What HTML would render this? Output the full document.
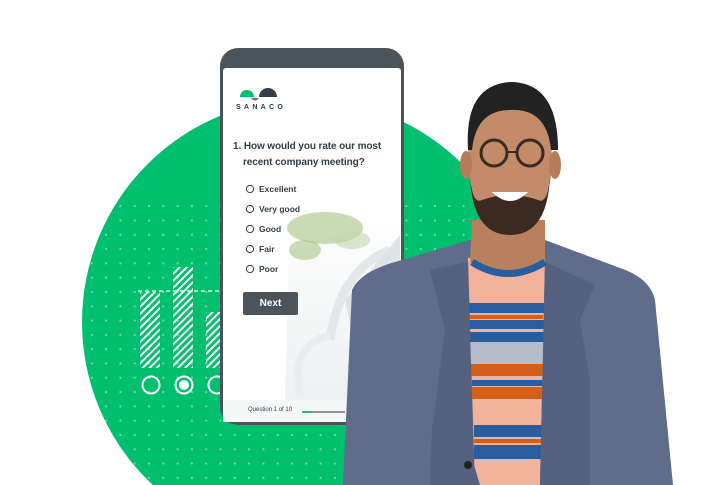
<!DOCTYPE html>
<html style="margin:0;width:720px;height:485px;overflow:hidden"><head><meta charset="utf-8"><style>
body{margin:0;width:720px;height:485px;overflow:hidden;background:#fff;font-family:"Liberation Sans",sans-serif;position:relative}
.abs{position:absolute}
</style></head><body>
<svg class="abs" style="left:0;top:0;display:block" width="720" height="485" viewBox="0 0 720 485">
<defs>
<pattern id="dots" width="14.3" height="14.3" patternUnits="userSpaceOnUse" x="3" y="3"><circle cx="3" cy="3" r="1.1" fill="#7ed9a6"/></pattern>
<pattern id="hatch" width="5" height="5" patternUnits="userSpaceOnUse" patternTransform="rotate(45)"><rect width="2" height="5" fill="#fff"/></pattern>
<clipPath id="cc"><circle cx="305" cy="322" r="223"/></clipPath>
<linearGradient id="sky" x1="0" y1="0" x2="0" y2="1"><stop offset="0" stop-color="#fff"/><stop offset="1" stop-color="#eef0f1"/></linearGradient>
</defs>
<circle cx="305" cy="322" r="223" fill="#00bf6f"/>
<rect x="82" y="200" width="400" height="285" fill="url(#dots)" clip-path="url(#cc)"/>
<rect x="140" y="292" width="20" height="76" fill="url(#hatch)"/>
<rect x="173" y="267" width="20" height="101" fill="url(#hatch)"/>
<rect x="206" y="312" width="20" height="56" fill="url(#hatch)"/>
<line x1="138" y1="291" x2="225" y2="291" stroke="#fff" stroke-width="1.2" stroke-dasharray="4 3"/>
<circle cx="151" cy="385" r="8.5" fill="none" stroke="#fff" stroke-width="2"/>
<circle cx="184" cy="385" r="8.5" fill="none" stroke="#fff" stroke-width="2"/>
<circle cx="184" cy="385" r="5" fill="#fff"/>
<circle cx="217" cy="385" r="8.5" fill="none" stroke="#fff" stroke-width="2"/>
<!-- phone -->
<rect x="220" y="48" width="184" height="377" rx="18" fill="#4b545b"/>
<rect x="223" y="68" width="178" height="354" rx="3" fill="#fff"/>
<path d="M290 205 L401 205 L401 400 L285 400 Z" fill="url(#sky)"/>
<ellipse cx="325" cy="228" rx="38" ry="16" fill="#b8cf9c" opacity=".75"/>
<ellipse cx="305" cy="250" rx="16" ry="10" fill="#aac48a" opacity=".6"/>
<ellipse cx="352" cy="240" rx="18" ry="9" fill="#c3d6ab" opacity=".6"/>
<path d="M330 340 q10 -70 60 -90" stroke="#e4e7e9" stroke-width="9" fill="none"/>
<path d="M345 300 L400 235 L400 360 L362 380 Z" fill="#e0e3e5"/>
<path d="M300 395 q-10 -50 30 -60" stroke="#eaecee" stroke-width="8" fill="none"/>
<rect x="223" y="400" width="178" height="22" fill="#f6f7f7"/>
<path d="M240 97 a7 7 0 0 1 14 0z" fill="#00bf6f"/>
<path d="M259 97 a9 9 0 0 1 18 0z" fill="#333e48"/>
<path d="M251 98 q4 5 8 0z" fill="#6b747b"/>
<circle cx="250" cy="189" r="3.6" fill="none" stroke="#333e48"/>
<circle cx="250" cy="209" r="3.6" fill="none" stroke="#333e48"/>
<circle cx="250" cy="229" r="3.6" fill="none" stroke="#333e48"/>
<circle cx="250" cy="249" r="3.6" fill="none" stroke="#333e48"/>
<circle cx="250" cy="269" r="3.6" fill="none" stroke="#333e48"/>
<rect x="243" y="292" width="55" height="23" rx="2" fill="#4b545b"/>
<line x1="302" y1="412" x2="345" y2="412" stroke="#6b747b" stroke-width="1.5"/>
<line x1="302" y1="412" x2="312" y2="412" stroke="#00bf6f" stroke-width="1.5"/>
<!-- man -->
<path d="M343 485 L352 290 Q360 272 395 262 L470 240 L545 240 L620 268 Q650 278 655 300 L673 485 Z" fill="#5f6c8a"/>
<path d="M468 258 L545 258 L540 485 L475 485 Z" fill="#f3b29b"/>
<g fill="#285ea0"><rect x="468" y="303" width="76" height="10"/><rect x="468" y="320" width="76" height="9"/><rect x="470" y="332" width="74" height="10"/><rect x="472" y="380" width="72" height="6"/><rect x="474" y="425" width="68" height="12"/><rect x="474" y="445" width="68" height="14"/></g>
<g fill="#d2601a"><rect x="469" y="315" width="74" height="4"/><rect x="471" y="364" width="72" height="12"/><rect x="471" y="387" width="72" height="12"/><rect x="474" y="439" width="68" height="4"/></g>
<rect x="470" y="342" width="74" height="22" fill="#b5bdcd"/>
<path d="M468 262 L474 465 L480 485 L430 485 L432 430 L445 330 L430 270 Z" fill="#55617e"/>
<path d="M545 262 L540 485 L590 485 L590 380 L580 320 L595 285 Z" fill="#55617e"/>
<path d="M472 220 L545 220 L545 262 Q508 285 470 262 Z" fill="#b9805d"/>
<path d="M472 262 Q508 285 545 262" stroke="#285ea0" stroke-width="7" fill="none"/>
<ellipse cx="510" cy="160" rx="42" ry="72" fill="#c48b68"/>
<ellipse cx="466" cy="165" rx="6" ry="14" fill="#b57b5a"/>
<ellipse cx="555" cy="165" rx="6" ry="14" fill="#b57b5a"/>
<path d="M468 150 Q464 85 510 82 Q558 82 558 150 L551 150 Q547 108 510 110 Q476 110 472 150 Z" fill="#222"/>
<path d="M470 175 Q472 235 510 235 Q548 235 550 175 Q548 205 538 200 Q510 190 482 200 Q472 205 470 175Z" fill="#3b2a22"/>
<path d="M492 192 Q510 210 528 192 Z" fill="#fff"/>
<circle cx="494" cy="153" r="13" fill="none" stroke="#3a2a20" stroke-width="3"/>
<circle cx="530" cy="153" r="13" fill="none" stroke="#3a2a20" stroke-width="3"/>
<line x1="507" y1="152" x2="517" y2="152" stroke="#3a2a20" stroke-width="2"/>
<circle cx="468" cy="465" r="4" fill="#222"/>
</svg>
<div class="abs" style="left:236px;top:104px;font-size:7px;letter-spacing:3.3px;font-weight:bold;color:#333e48">SANACO</div>
<div class="abs" style="left:233px;top:139px;font-size:10px;line-height:16px;color:#333e48;font-weight:bold;width:165px;letter-spacing:-0.1px">1. How would you rate our most<br><span style="padding-left:10px">recent company meeting?</span></div>
<div class="abs" style="left:259px;top:179px;font-size:8.5px;line-height:20px;color:#333e48;font-weight:bold">Excellent<br>Very good<br>Good<br>Fair<br>Poor</div>
<div class="abs" style="left:243px;top:292px;width:55px;line-height:23px;text-align:center;font-size:10px;color:#fff;font-weight:bold">Next</div>
<div class="abs" style="left:248px;top:407px;font-size:6px;color:#333e48">Question 1 of 10</div>
</body></html>
